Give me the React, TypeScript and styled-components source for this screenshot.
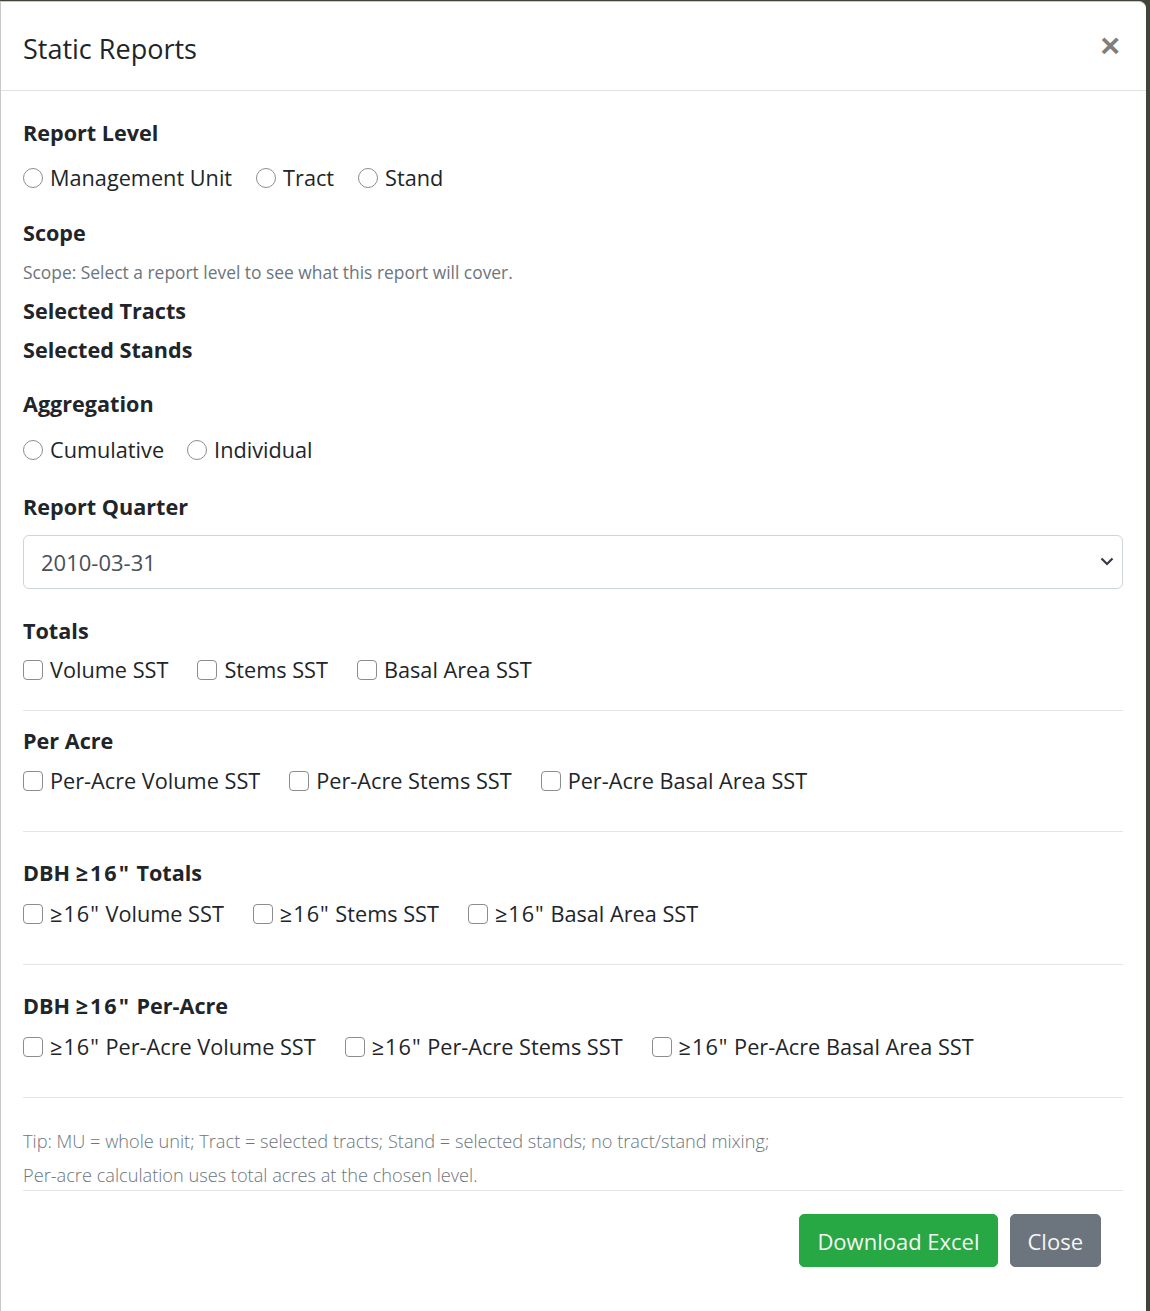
import React from 'react';
import styled, { createGlobalStyle } from 'styled-components';

const GlobalStyle = createGlobalStyle`
  html, body {
    margin: 0;
    padding: 0;
    background: #41443b;
  }
  body {
    font-family: "Open Sans", "Noto Sans", "Liberation Sans", sans-serif;
    color: #212529;
  }
`;

const Modal = styled.div`
  margin-top: 1px;
  width: 1146px;
  min-height: 1320px;
  box-sizing: border-box;
  background: #fff;
  border: 1px solid #c8c8c8;
  border-right: none;
  border-radius: 0 7px 0 0;
`;

const Header = styled.div`
  display: flex;
  align-items: center;
  justify-content: space-between;
  padding: 26px 26px 21px 22px;
  border-bottom: 1px solid #dee2e6;
`;

const Title = styled.h5`
  margin: 0;
  font-size: 27px;
  font-weight: 400;
  line-height: 41px;
`;

const CloseX = styled.button`
  margin-top: -8px;
  border: none;
  background: transparent;
  padding: 0;
  font-family: "Liberation Sans", sans-serif;
  font-size: 34px;
  font-weight: 700;
  line-height: 1;
  color: #000;
  opacity: 0.5;
  cursor: pointer;
`;

const Body = styled.div`
  padding: 27px 23px 0 22px;
`;

const Heading = styled.div<{ $mt?: number }>`
  margin-top: ${(p) => p.$mt ?? 0}px;
  font-size: 21.6px;
  font-weight: 700;
  line-height: 30px;
`;

const Hint = styled.div<{ $mt?: number }>`
  margin-top: ${(p) => p.$mt ?? 0}px;
  font-size: 17.4px;
  line-height: 26px;
  color: #6c757d;
`;

const OptionRow = styled.div<{ $mt: number; $gap: number }>`
  display: flex;
  align-items: center;
  gap: ${(p) => p.$gap}px;
  margin-top: ${(p) => p.$mt}px;
  height: 34px;
`;

const Option = styled.label`
  display: flex;
  align-items: center;
  gap: 7px;
  font-size: 21.7px;
  line-height: 34px;
  color: #212529;
  cursor: pointer;
`;

// the "≥16"" token is set a little wider in the reference font
const Token = styled.span<{ $space: number }>`
  letter-spacing: ${(p) => p.$space}px;
`;

const Radio = styled.input.attrs({ type: 'radio' })`
  appearance: none;
  margin: 0;
  width: 20px;
  height: 20px;
  border: 1px solid #8d8d8d;
  border-radius: 50%;
  background: #fff;
`;

const Check = styled.input.attrs({ type: 'checkbox' })`
  appearance: none;
  margin: 0;
  width: 20px;
  height: 20px;
  border: 1px solid #8d8d8d;
  border-radius: 4px;
  background: #fff;
`;

const SelectWrap = styled.div`
  position: relative;
  margin-top: 13px;
`;

const Select = styled.select`
  appearance: none;
  width: 100%;
  height: 54px;
  box-sizing: border-box;
  padding: 0 40px 0 17px;
  border: 1px solid #ced4da;
  border-radius: 6px;
  background: #fff;
  font-family: "Open Sans", "Noto Sans", sans-serif;
  font-size: 22px;
  color: #495057;
`;

const Chevron = styled.svg`
  position: absolute;
  right: 9px;
  top: 21px;
  pointer-events: none;
`;

const Rule = styled.hr<{ $mt: number }>`
  margin: ${(p) => p.$mt}px 0 0;
  border: none;
  border-top: 1px solid #e5e5e5;
`;

const Tips = styled.div`
  margin-top: 28px;
  font-size: 18.2px;
  font-weight: 300;
  color: #6c757d;
`;

const TipLine = styled.div<{ $mt?: number }>`
  margin-top: ${(p) => p.$mt ?? 0}px;
  line-height: 30px;
`;

const Footer = styled.div`
  display: flex;
  justify-content: flex-end;
  gap: 12px;
  padding: 23px 22px 40px 0;
  border-top: 1px solid #e5e5e5;
`;

const Button = styled.button<{ $variant: 'success' | 'secondary' }>`
  height: 53px;
  padding: 0 17px;
  border: 1px solid ${(p) => (p.$variant === 'success' ? '#28a745' : '#6c757d')};
  border-radius: 5px;
  background: ${(p) => (p.$variant === 'success' ? '#28a745' : '#6c757d')};
  color: #f4f6f4;
  font-family: "Open Sans", "Noto Sans", sans-serif;
  font-size: 22px;
  line-height: 1;
  cursor: pointer;
`;

const spaced = (text: string, space: number) =>
  text.split(/(≥16")/).map((part, i) =>
    part === '≥16"' ? (
      <Token key={i} $space={space}>
        {part}
      </Token>
    ) : (
      part
    )
  );

type Group = { title: string; items: string[]; mt: number; rowMt: number };

const checkGroups: Group[] = [
  { title: 'Per Acre', items: ['Per-Acre Volume SST', 'Per-Acre Stems SST', 'Per-Acre Basal Area SST'], mt: 15, rowMt: 8 },
  { title: 'DBH ≥16" Totals', items: ['≥16" Volume SST', '≥16" Stems SST', '≥16" Basal Area SST'], mt: 26, rowMt: 9 },
  { title: 'DBH ≥16" Per-Acre', items: ['≥16" Per-Acre Volume SST', '≥16" Per-Acre Stems SST', '≥16" Per-Acre Basal Area SST'], mt: 26, rowMt: 9 },
];

const App: React.FC = () => {
  return (
    <>
      <GlobalStyle />
      <Modal>
        <Header>
          <Title>Static Reports</Title>
          <CloseX aria-label="Close">×</CloseX>
        </Header>
        <Body>
          <Heading>Report Level</Heading>
          <OptionRow $mt={13} $gap={24}>
            {['Management Unit', 'Tract', 'Stand'].map((l) => (
              <Option key={l}>
                <Radio name="level" />
                {l}
              </Option>
            ))}
          </OptionRow>

          <Heading $mt={23}>Scope</Heading>
          <Hint $mt={11}>Scope: Select a report level to see what this report will cover.</Hint>
          <Heading $mt={11}>Selected Tracts</Heading>
          <Heading $mt={9}>Selected Stands</Heading>

          <Heading $mt={24}>Aggregation</Heading>
          <OptionRow $mt={14} $gap={23}>
            {['Cumulative', 'Individual'].map((l) => (
              <Option key={l}>
                <Radio name="agg" />
                {l}
              </Option>
            ))}
          </OptionRow>

          <Heading $mt={25}>Report Quarter</Heading>
          <SelectWrap>
            <Select defaultValue="2010-03-31">
              <option>2010-03-31</option>
            </Select>
            <Chevron width="14" height="10" viewBox="0 0 14 10">
              <path d="M1.5 2.5 L7 8 L12.5 2.5" fill="none" stroke="#343a40" strokeWidth="2.2" />
            </Chevron>
          </SelectWrap>

          <Heading $mt={27}>Totals</Heading>
          <OptionRow $mt={7} $gap={29}>
            {['Volume SST', 'Stems SST', 'Basal Area SST'].map((l) => (
              <Option key={l}>
                <Check />
                {l}
              </Option>
            ))}
          </OptionRow>
          <Rule $mt={23} />

          {checkGroups.map((g) => (
            <React.Fragment key={g.title}>
              <Heading $mt={g.mt}>{spaced(g.title, 2)}</Heading>
              <OptionRow $mt={g.rowMt} $gap={29}>
                {g.items.map((l) => (
                  <Option key={l}>
                    <Check />
                    <span>{spaced(l, 1)}</span>
                  </Option>
                ))}
              </OptionRow>
              <Rule $mt={33} />
            </React.Fragment>
          ))}

          <Tips>
            <TipLine>Tip: MU = whole unit; Tract = selected tracts; Stand = selected stands; no tract/stand mixing;</TipLine>
            <TipLine $mt={4}>Per-acre calculation uses total acres at the chosen level.</TipLine>
          </Tips>

          <Footer>
            <Button $variant="success">Download Excel</Button>
            <Button $variant="secondary">Close</Button>
          </Footer>
        </Body>
      </Modal>
    </>
  );
};

export default App;
